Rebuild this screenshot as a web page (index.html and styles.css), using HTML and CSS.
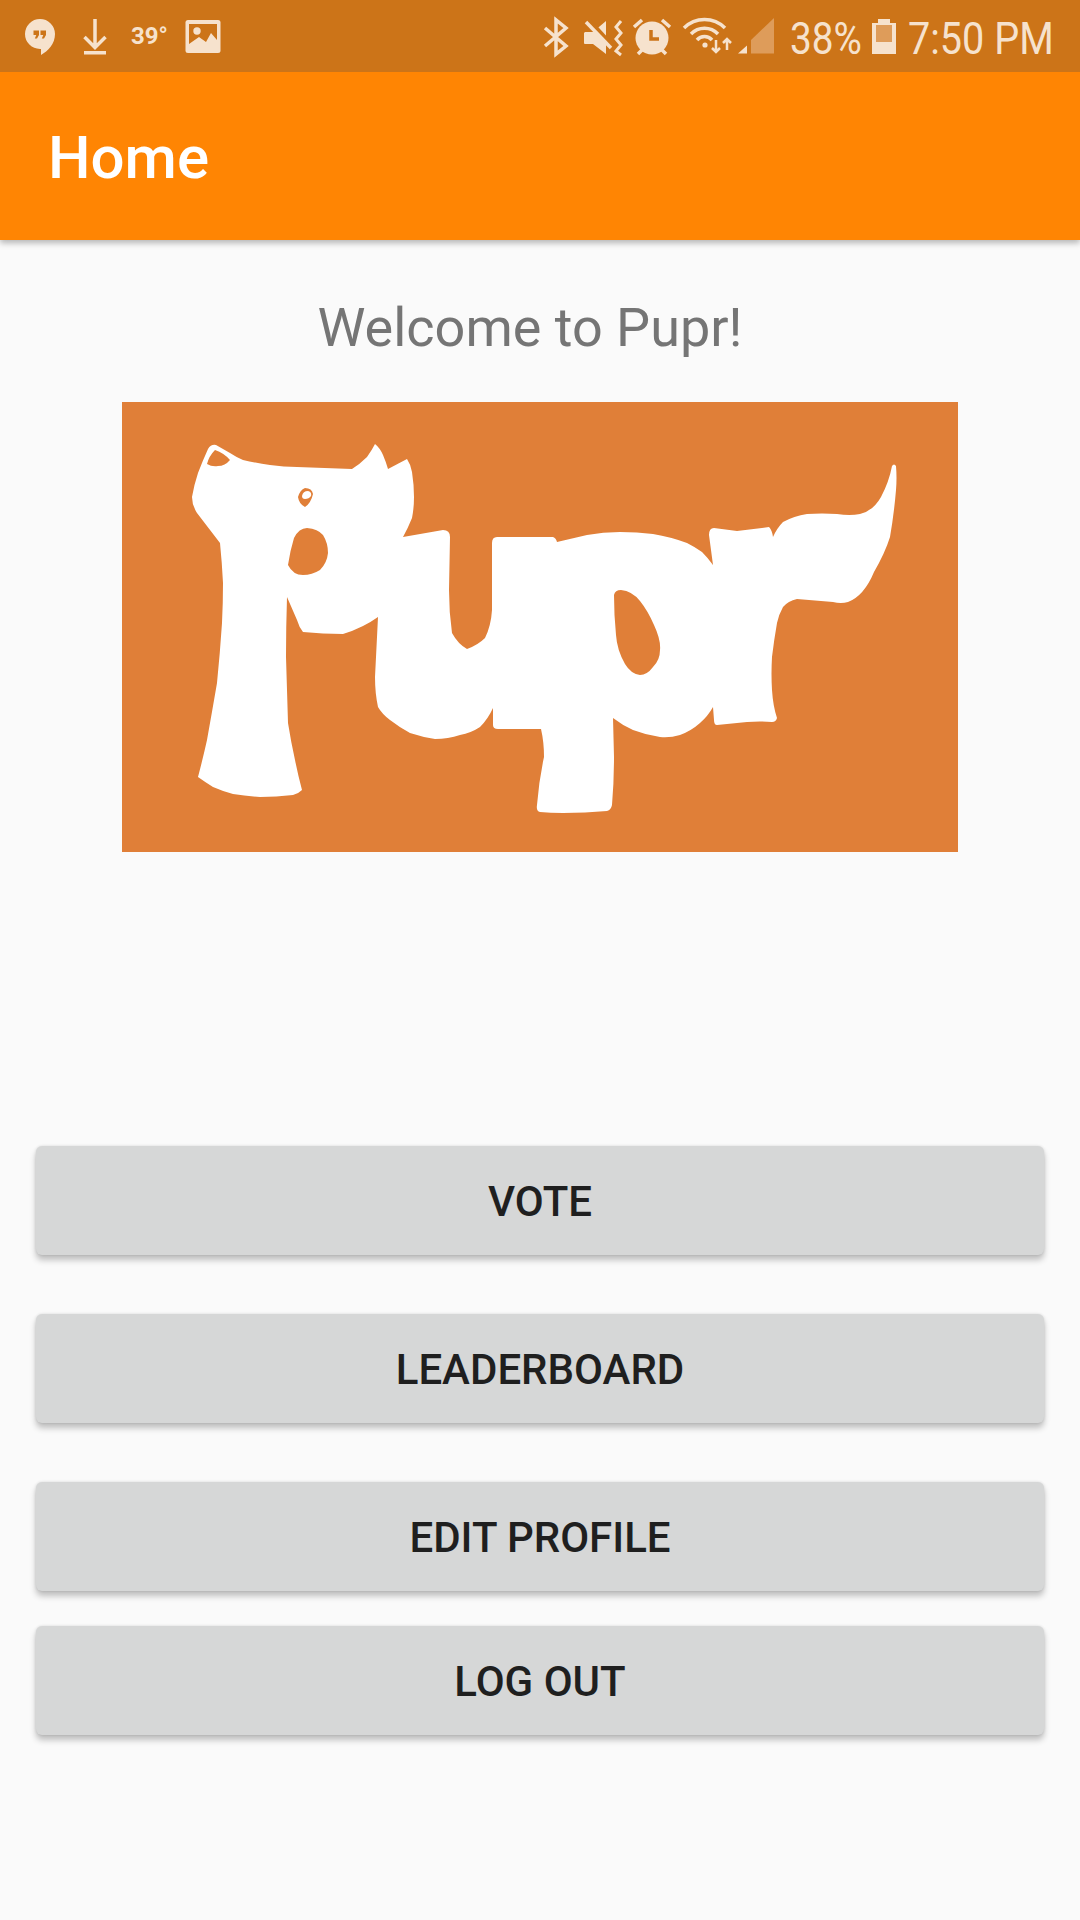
FILE: index.html
```html
<!DOCTYPE html>
<html lang="en">
<head>
<meta charset="utf-8">
<title>Home</title>
<link rel="stylesheet" href="styles.css">
</head>
<body>
<div class="screen">
  <header class="top">
    <div class="status">
      <div class="status-group">
        <svg class="ic w46" viewBox="24 0 46 72"><path class="fg" d="M40 19a15 15 0 0 1 15 15c0 10-7 17-14 21v-6h-1a15 15 0 0 1 0-30z"/><path class="bg" d="M33.500 30.500h5.500v4.500l-2 3.500h-2.200l1.500-3.500h-2.800zM40.500 30.500h5.500v4.500l-2 3.500h-2.200l1.500-3.500h-2.800z"/></svg>
        <svg class="ic w55" viewBox="70 0 55 72"><path class="ln" d="M95 19v28M84.500 37l10.500 10.500 10.500-10.500"/><rect class="fg" x="84" y="51" width="22" height="3.500"/></svg>
        <span class="temp">39°</span>
        <svg class="ic w46" viewBox="180 0 46 72"><rect class="fg" x="185.500" y="20" width="35" height="33" rx="2.500"/><rect class="bg" x="189" y="24" width="28" height="25"/><path class="fg" d="M189 44l10-7 7 5 5-9 6 7v10h-28z"/><circle class="fg" cx="197" cy="31" r="3.700"/></svg>
      </div>
      <div class="status-group">
        <svg class="ic w35" viewBox="540 0 35 72"><path class="ln" d="M545 28l21 18-10 8V20l10 8-21 18"/></svg>
        <svg class="ic w53" viewBox="575 0 53 72"><path class="fg" d="M585 32h8l13-11v33l-13-10h-8a1 1 0 0 1-1-1V33z"/><path class="cut" d="M590 21l23 25"/><path class="ln" d="M586 22l25 26"/><path class="ln thin" d="M621 21l-5 6 5 6-5 6 5 6-5 6 5 4"/></svg>
        <svg class="ic w48" viewBox="628 0 48 72"><circle class="fg" cx="652" cy="38" r="16.500"/><path class="hand" d="M651 30v9h8"/><path class="ln" d="M634 27l8-7M662 20l8 7M638 54l4-4M662 50l4 4"/></svg>
        <svg class="ic w58" viewBox="676 0 58 72"><path class="ln" d="M684 28a29 29 0 0 1 41 0M691 34a19 19 0 0 1 27 0M697 40a10 10 0 0 1 15 0"/><circle class="fg" cx="705" cy="45" r="2.600"/><path class="ln slim" d="M716 40v12M712 48l4 4 4-4M727 50V39M723 43l4-4 4 4"/></svg>
        <svg class="ic w44" viewBox="734 0 44 72"><path class="fg" d="M738 53.500l9-8v8z"/><path class="dim" d="M751 53.500V40l23-22v35.500z"/></svg>
        <span class="clock pct"><span class="squeeze">38%</span></span>
        <svg class="ic w32" viewBox="868 0 32 72"><path class="fg" d="M878 19h12v4h6v31h-24V23h6z"/><rect class="dim" x="876" y="25" width="16" height="17"/></svg>
        <span class="clock time"><span class="squeeze">7:50 PM</span></span>
      </div>
    </div>
    <div class="appbar"><h1 class="title">Home</h1></div>
  </header>
  <main class="content">
    <p class="welcome">Welcome to Pupr!</p>
    <svg class="logo" viewBox="122 402 836 450" role="img" aria-label="Pupr logo">
      <rect x="122" y="402" width="836" height="450" class="logo-bg"/>
      <path class="logo-shape" fill-rule="evenodd" d="M208 449Q211 444 216 445L230 453Q236 457 243 460Q256 463 270 465Q284 467 297 467L352 469Q360 464 367 457Q372 450 375 444Q380 448 383 455Q386 462 388 469L407 459Q411 465 412 472Q414 485 414 497Q414 508 412 518Q408 528 403 537L443 530Q450 530 450 537L449 590Q449 612 452 633Q458 644 467 649Q478 645 485 638Q491 626 492 610L492 543Q492 537 497 537L553 537Q556 538 557 542L587 535Q603 532 620 532Q637 532 653 534Q671 537 687 543Q695 547 702 552Q708 558 713 565L709 535Q709 528 714 528L737 531L769 527Q772 530 773 537Q777 528 783 522Q794 516 807 514Q822 513 837 514Q850 516 860 514Q873 511 881 497Q889 482 892 466Q894 463 896 466Q897 478 896 490Q894 514 890 537Q885 553 874 572Q864 596 848 602Q841 604 833 602L797 599Q788 601 783 607Q779 614 777 623Q774 640 772 657Q771 674 772 690Q773 706 777 718Q776 722 772 722Q760 721 747 722L717 725Q714 725 714 720L713 707Q708 716 700 723Q691 731 680 735Q670 738 660 737Q646 735 633 730Q622 725 613 718L614 757Q614 782 612 805Q611 810 607 811Q585 813 563 813Q550 813 540 812Q536 811 537 805Q539 780 544 757Q544 742 541 729L498 729Q493 729 493 725L493 708Q488 719 480 727Q471 733 460 735Q448 739 435 739Q422 737 410 733Q399 727 390 720Q382 714 378 707Q375 693 375 677L378 617Q371 622 363 626Q353 631 343 634Q323 634 303 632Q299 627 297 620L287 597Q286 627 286 657Q287 690 288 723Q291 742 295 760Q298 775 302 790Q298 794 293 795Q276 797 260 797Q246 796 233 794Q222 791 213 787Q205 782 198 777Q203 758 207 740Q212 712 217 683Q220 653 222 623Q223 603 223 583Q222 563 220 543L197 513Q192 505 192 497Q194 485 198 473Q203 460 208 449ZM207 464Q209 456 215 450Q224 453 230 460Q225 466 218 466Q212 467 207 464ZM298 497Q300 490 305 488Q312 488 313 494Q311 503 305 507Q299 504 298 497ZM302 496Q303 491 308 491Q312 492 311 496Q309 499 305 499Q302 499 302 496ZM288 565Q290 551 294 538Q299 528 307 528Q318 529 323 535Q328 543 328 553Q327 563 320 570Q312 575 303 575Q293 575 288 565ZM614 595Q615 590 621 590Q632 591 640 601Q648 611 654 625Q661 640 660 650Q660 660 653 667Q647 675 640 675Q631 674 625 664Q617 650 616 635Q614 615 614 595Z"/>
    </svg>
    <div class="actions">
      <button class="btn" type="button">VOTE</button>
      <button class="btn" type="button">LEADERBOARD</button>
      <button class="btn" type="button">EDIT PROFILE</button>
      <button class="btn last" type="button">LOG OUT</button>
    </div>
  </main>
</div>
</body>
</html>
```
FILE: styles.css
```css
* { box-sizing: border-box; }
html, body { margin: 0; padding: 0; }
body { background: #fafafa; font-family: Roboto, "Liberation Sans", sans-serif; }
.screen { width: 1080px; height: 1920px; overflow: hidden; display: flex; flex-direction: column; }

.top { box-shadow: 0 3px 6px rgba(0,0,0,.28); position: relative; z-index: 1; }
.status { height: 72px; background: #cc7418; display: flex; justify-content: space-between; color: #f6e2cd; padding: 0 20px 0 24px; }
.status-group { display: flex; align-items: center; height: 72px; }
.ic { height: 72px; display: block; flex: none; }
.w32 { width: 32px; } .w35 { width: 35px; } .w44 { width: 44px; } .w46 { width: 46px; } .w48 { width: 48px; } .w53 { width: 53px; } .w55 { width: 55px; } .w58 { width: 58px; }
.fg { fill: #f6e2cd; }
.bg { fill: #cc7418; }
.dim { fill: #de9c5a; }
.ln { fill: none; stroke: #f6e2cd; stroke-width: 3.500; }
.ln.thin { stroke-width: 3; }
.ln.slim { stroke-width: 2.500; }
.cut { fill: none; stroke: #cc7418; stroke-width: 4; }
.hand { fill: none; stroke: #cc7418; stroke-width: 3.500; }
.temp { width: 55px; padding-left: 6px; font-size: 24px; font-weight: 700; line-height: 60px; }
.clock { display: block; font-weight: 400; font-size: 45px; line-height: 72px; padding-top: 5px; white-space: nowrap; flex: none; }
.pct { width: 90px; padding-left: 12px; }
.time { width: 160px; padding-left: 8px; }
.squeeze { display: inline-block; transform: scaleX(.86); transform-origin: left center; }
.time .squeeze { transform: scaleX(.88); }

.appbar { height: 168px; background: #ff8503; display: flex; align-items: center; padding: 3px 0 0 48px; }
.title { margin: 0; color: #fff; font-size: 60px; font-weight: 500; }

.content { flex: 1; display: flex; flex-direction: column; align-items: center; }
.welcome { margin: 54px 20px 0 0; height: 66px; line-height: 68px; font-size: 54px; color: #757575; }
.logo { display: block; width: 836px; height: 450px; margin-top: 42px; }
.logo-bg { fill: #e07f38; }
.logo-shape { fill: #fff; }
.actions { width: 1008px; margin-top: 294px; display: flex; flex-direction: column; gap: 59px; }
.btn { height: 109px; padding: 2px 0 0; border: 0; border-radius: 6px; background: #d6d7d7; color: #1f1f1f; font: 500 42px Roboto, "Liberation Sans", sans-serif; box-shadow: 0 5px 6px rgba(0,0,0,.24), 0 0 3px rgba(0,0,0,.12); }
.btn.last { margin-top: -24px; }
```
